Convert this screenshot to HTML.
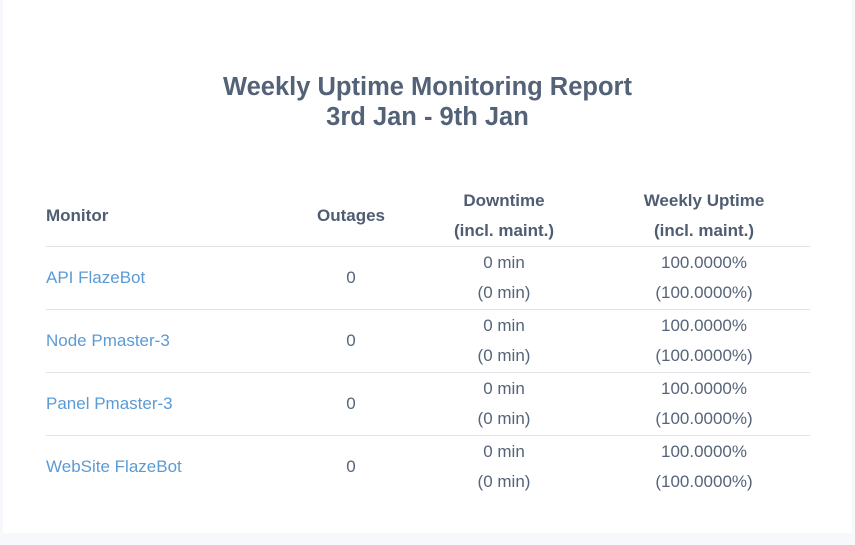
<!DOCTYPE html>
<html><head><meta charset="utf-8"><style>
html,body{margin:0;padding:0;background:#f6f8fb;width:855px;height:545px;overflow:hidden;font-family:"Liberation Sans",Arial,sans-serif}
.card{position:absolute;left:3px;top:0;width:849px;height:533px;background:#fff}
h1{position:absolute;left:0;top:72px;width:855px;margin:0;text-align:center;font-size:25.5px;line-height:30px;font-weight:bold;color:#546278}
table{position:absolute;left:46px;top:185px;width:764px;border-collapse:collapse;font-size:17px;color:#566479}
td,th{padding:0;line-height:30px;vertical-align:middle}
th{font-weight:bold;color:#4f5d72;height:61px}
tr.r td{border-top:1px solid #dfe2e6;height:62px}
.c0{width:246px;text-align:left}
.c1{width:118px;text-align:center}
.c2{width:188px;text-align:center}
.c3{width:212px;text-align:center}
a{color:#5b9bd5;text-decoration:none}
</style></head><body>
<div class="card"></div>
<h1>Weekly Uptime Monitoring Report<br>3rd Jan - 9th Jan</h1>
<table>
<tr><th class="c0">Monitor</th><th class="c1">Outages</th><th class="c2">Downtime<br>(incl. maint.)</th><th class="c3">Weekly Uptime<br>(incl. maint.)</th></tr>
<tr class="r"><td class="c0"><a>API FlazeBot</a></td><td class="c1">0</td><td class="c2">0 min<br>(0 min)</td><td class="c3">100.0000%<br>(100.0000%)</td></tr>
<tr class="r"><td class="c0"><a>Node Pmaster-3</a></td><td class="c1">0</td><td class="c2">0 min<br>(0 min)</td><td class="c3">100.0000%<br>(100.0000%)</td></tr>
<tr class="r"><td class="c0"><a>Panel Pmaster-3</a></td><td class="c1">0</td><td class="c2">0 min<br>(0 min)</td><td class="c3">100.0000%<br>(100.0000%)</td></tr>
<tr class="r"><td class="c0"><a>WebSite FlazeBot</a></td><td class="c1">0</td><td class="c2">0 min<br>(0 min)</td><td class="c3">100.0000%<br>(100.0000%)</td></tr>
</table>
</body></html>
